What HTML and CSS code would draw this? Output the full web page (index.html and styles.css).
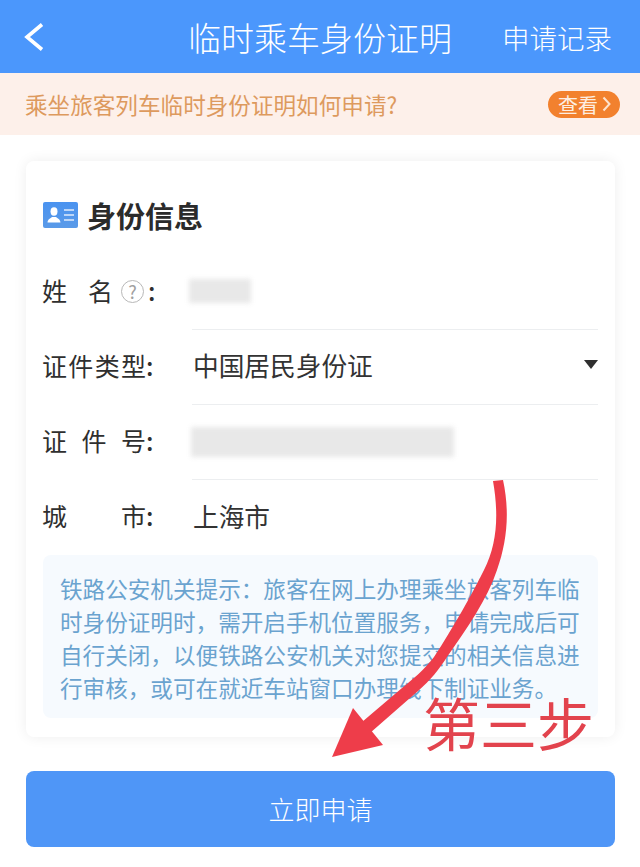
FILE: index.html
```html
<!DOCTYPE html>
<html lang="zh-CN">
<head>
    <meta charset="UTF-8">
    <meta name="viewport" content="width=device-width, initial-scale=1.0">
    <title>临时乘车身份证明</title>
    <link rel="stylesheet" href="styles.css">
</head>
<body>
    <div class="page">
        <div class="header">
            <div class="header-back">
                <svg width="20" height="28" viewBox="0 0 20 28"><path d="M18 1.500 L3 14 L18 26.500" fill="none" stroke="#fff" stroke-width="3.600"/></svg>
            </div>
            <div class="header-title">临时乘车身份证明</div>
            <div class="header-link">申请记录</div>
        </div>

        <div class="banner">
            <span class="banner-text">乘坐旅客列车临时身份证明如何申请?</span>
            <span class="banner-btn">查看
                <svg width="9" height="16" viewBox="0 0 9 16"><path d="M1.500 1.500 L7.500 8 L1.500 14.500" fill="none" stroke="#fde3cf" stroke-width="2"/></svg>
            </span>
        </div>

        <div class="card">
            <div class="card-head">
                <svg class="card-icon" width="35" height="26" viewBox="0 0 35 26">
                    <defs>
                        <linearGradient id="cardBlue" x1="0" y1="0" x2="0" y2="1">
                            <stop offset="0" stop-color="#4a93f0"/>
                            <stop offset="1" stop-color="#5a9ae8"/>
                        </linearGradient>
                    </defs>
                    <rect width="35" height="26" rx="2" fill="url(#cardBlue)"/>
                    <ellipse cx="11" cy="9.500" rx="3.500" ry="4.200" fill="#fff"/>
                    <path d="M4.500 20.500 C4.800 17 7.500 16.500 9 15 L13 15 C14.500 16.500 17.200 17 17.500 20.500 Z" fill="#fff"/>
                    <path d="M21 8 H31 M21 13 H31 M21 18 H31" stroke="#bcd6f8" stroke-width="1.800"/>
                </svg>
                <span class="card-title">身份信息</span>
            </div>

            <div class="field">
                <div class="field-label">
                    <div class="label-text label-short"><span>姓</span><span>名</span></div>
                    <span class="help">?</span>
                    <span class="colon">:</span>
                </div>
                <div class="field-value">
                    <div class="smudge smudge-name"></div>
                </div>
            </div>
            <div class="field">
                <div class="field-label">
                    <div class="label-text"><span>证</span><span>件</span><span>类</span><span>型</span></div>
                    <span class="colon">:</span>
                </div>
                <div class="field-value">
                    <span>中国居民身份证</span>
                    <span class="select-arrow"></span>
                </div>
            </div>
            <div class="field">
                <div class="field-label">
                    <div class="label-text"><span>证</span><span>件</span><span>号</span></div>
                    <span class="colon">:</span>
                </div>
                <div class="field-value">
                    <div class="smudge smudge-id"></div>
                </div>
            </div>
            <div class="field field-last">
                <div class="field-label">
                    <div class="label-text"><span>城</span><span>市</span></div>
                    <span class="colon">:</span>
                </div>
                <div class="field-value">
                    <span>上海市</span>
                </div>
            </div>

            <div class="notice">铁路公安机关提示：旅客在网上办理乘坐旅客列车临时身份证明时，需开启手机位置服务，申请完成后可自行关闭，以便铁路公安机关对您提交的相关信息进行审核，或可在就近车站窗口办理线下制证业务。</div>
        </div>

        <div class="submit">立即申请</div>

        <!-- red annotation on top of the screenshot -->
        <svg class="arrow" width="640" height="867" viewBox="0 0 640 867">
            <path d="M493 481 C499 515 497 545 484 570 C472 594 453 628 434 657 C424 670 412 680 402 688 L362 722 L370 733 L418 691 C430 681 440 668 447 657 C467 628 487 600 497 570 C507 542 510 512 503 480 Z" fill="#ee3d4a"/>
            <path d="M332 757 L353 708 L383 745 Z" fill="#ee3d4a"/>
        </svg>
        <div class="step-note">第三步</div>
    </div>
</body>
</html>
```

FILE: styles.css
```css
/* Base */
* {
    margin: 0;
    padding: 0;
    box-sizing: border-box;
}

body {
    background: #fff;
    font-family: "Noto Sans CJK SC", "Liberation Sans", sans-serif;
    color: #333;
}

.page {
    position: relative;
    width: 640px;
    height: 867px;
    overflow: hidden;
}

/* Header */
.header {
    display: grid;
    grid-template-columns: 1fr auto 1fr;
    align-items: center;
    height: 73px;
    background: #4b97fc;
    color: #fff;
}

.header-back {
    display: flex;
    padding-left: 24px;
}

.header-title {
    font-size: 33px;
    font-weight: 300;
}

.header-link {
    justify-self: end;
    padding-right: 28px;
    font-size: 27.5px;
    font-weight: 300;
}

/* Banner */
.banner {
    display: flex;
    align-items: center;
    justify-content: space-between;
    height: 62px;
    padding: 0 20px 0 25px;
    background: #fdf0ea;
}

.banner-text {
    font-size: 22.6px;
    color: #dd9a5e;
}

.banner-btn {
    display: flex;
    align-items: center;
    gap: 4px;
    height: 27px;
    padding: 0 9px 0 10px;
    border-radius: 14px;
    background: #f2812e;
    color: #fdeee2;
    font-size: 20px;
    line-height: 27px;
}

/* Card */
.card {
    margin: 26px 25px 0 26px;
    height: 576px;
    padding: 0 17px;
    border-radius: 8px;
    background: #fff;
    box-shadow: 0 0 14px rgba(0, 0, 0, 0.07);
}

.card-head {
    display: flex;
    align-items: center;
    gap: 9px;
    height: 94px;
    padding-top: 13px;
}

.card-title {
    font-size: 29px;
    font-weight: 700;
    color: #2b2b2b;
    line-height: 30px;
}

/* Form rows */
.field {
    display: flex;
    height: 75px;
}

.field-label {
    display: flex;
    align-items: center;
    flex: 0 0 149px;
    padding-bottom: 6px;
    font-size: 25px;
    color: #2f2f2f;
}

.label-text {
    display: flex;
    justify-content: space-between;
    width: 104px;
    margin-left: -1px;
}

.label-short {
    width: 71px;
}

.colon {
    font-weight: 500;
}

.help {
    width: 23px;
    height: 23px;
    margin: 3px 4px 0 8px;
    border: 1.5px solid #b8b8b8;
    border-radius: 50%;
    color: #a0a0a0;
    font-size: 18px;
    line-height: 20px;
    text-align: center;
}

.field-value {
    display: flex;
    align-items: center;
    justify-content: space-between;
    flex: 1;
    padding: 0 0 5px 1px;
    border-bottom: 1px solid #eceef0;
    font-size: 25.7px;
    color: #333;
}

.field-last .field-value {
    border-bottom: none;
}

.select-arrow {
    width: 0;
    height: 0;
    border-left: 7px solid transparent;
    border-right: 7px solid transparent;
    border-top: 9px solid #2f2f2f;
}

.smudge {
    background: #e8e8e8;
    filter: blur(2.5px);
}

.smudge-name {
    width: 62px;
    height: 24px;
    margin: 2px 0 0 -4px;
}

.smudge-id {
    width: 263px;
    height: 30px;
    margin: 5px 0 0 -2px;
}

/* Notice */
.notice {
    padding: 17px 17px 0;
    height: 163px;
    border-radius: 8px;
    background: #f6fafe;
    color: #6aa3cf;
    font-size: 22.6px;
    line-height: 33px;
}

/* Submit */
.submit {
    margin: 34px 25px 0 26px;
    height: 76px;
    border-radius: 8px;
    background: #4f96f7;
    color: #fff;
    font-size: 26px;
    font-weight: 300;
    line-height: 76px;
    text-align: center;
}

/* Annotation overlay */
.arrow {
    position: absolute;
    top: 0;
    left: 0;
}

.step-note {
    position: absolute;
    top: 693px;
    left: 423px;
    color: #e2434d;
    font-size: 57px;
    line-height: 56px;
}
```
